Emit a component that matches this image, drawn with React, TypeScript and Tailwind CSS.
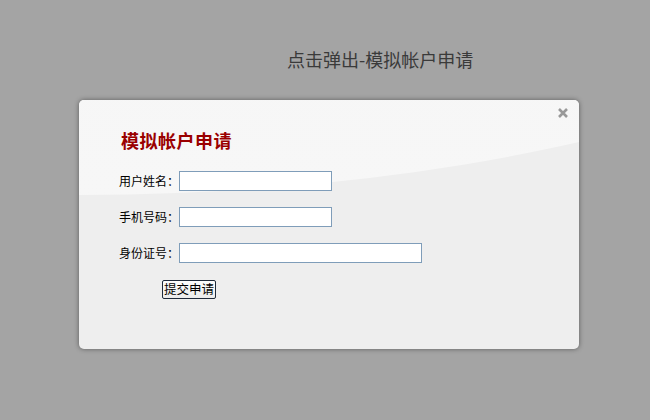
export default function App() {
  const fields = [
    { label: "用户姓名：", width: "w-[153px]" },
    { label: "手机号码：", width: "w-[153px]" },
    { label: "身份证号：", width: "w-[243px]" },
  ];

  return (
    <div className="w-[650px] h-[420px] bg-[#a4a4a4] overflow-hidden font-['Noto_Sans_CJK_SC',sans-serif]">
      <div className="pt-[47px] pl-[287px] text-[18px] leading-6 text-[#3a3a3a]">
        点击弹出-模拟帐户申请
      </div>

      <div className="relative ml-[79px] mt-[29px] w-[500px] h-[249px] rounded-[5px] bg-[#eeeeee] shadow-[0_0_5px_rgba(0,0,0,0.45)] overflow-hidden">
        {/* glossy highlight */}
        <div className="absolute left-[-1000px] top-[-695px] w-[2000px] h-[790px] rounded-[50%] bg-gradient-to-b from-[#f4f4f4] to-[#f7f7f7]" />

        <button className="absolute right-[10px] top-[6px] w-[13px] h-[13px] flex items-center justify-center">
          <svg width="12" height="12" viewBox="0 0 12 12">
            <path d="M2 2 L10 10 M10 2 L2 10" stroke="#999999" strokeWidth="2.6" strokeLinecap="butt" />
          </svg>
        </button>

        <div className="relative pt-[28px] pl-[40px]">
          <h2 className="pl-[2px] text-[18px] leading-6 font-bold text-[#9a0000] tracking-[0.5px]">
            模拟帐户申请
          </h2>

          <div className="mt-[19px] flex flex-col gap-[16px]">
            {fields.map((f) => (
              <div key={f.label} className="flex items-center">
                <span className="w-[60px] text-[12px] leading-5 text-black">{f.label}</span>
                <input
                  type="text"
                  className={`${f.width} h-[20px] bg-white border border-[#7f9db9] outline-none`}
                />
              </div>
            ))}
          </div>

          <div className="mt-[12px] pl-[43px]">
            <button className="h-[19px] px-[1px] rounded-[2px] border border-[#1f2a3a] bg-gradient-to-b from-[#fdfdfd] to-[#ececec] text-[12.5px] leading-[16px] text-black">
              提交申请
            </button>
          </div>
        </div>
      </div>
    </div>
  );
}
